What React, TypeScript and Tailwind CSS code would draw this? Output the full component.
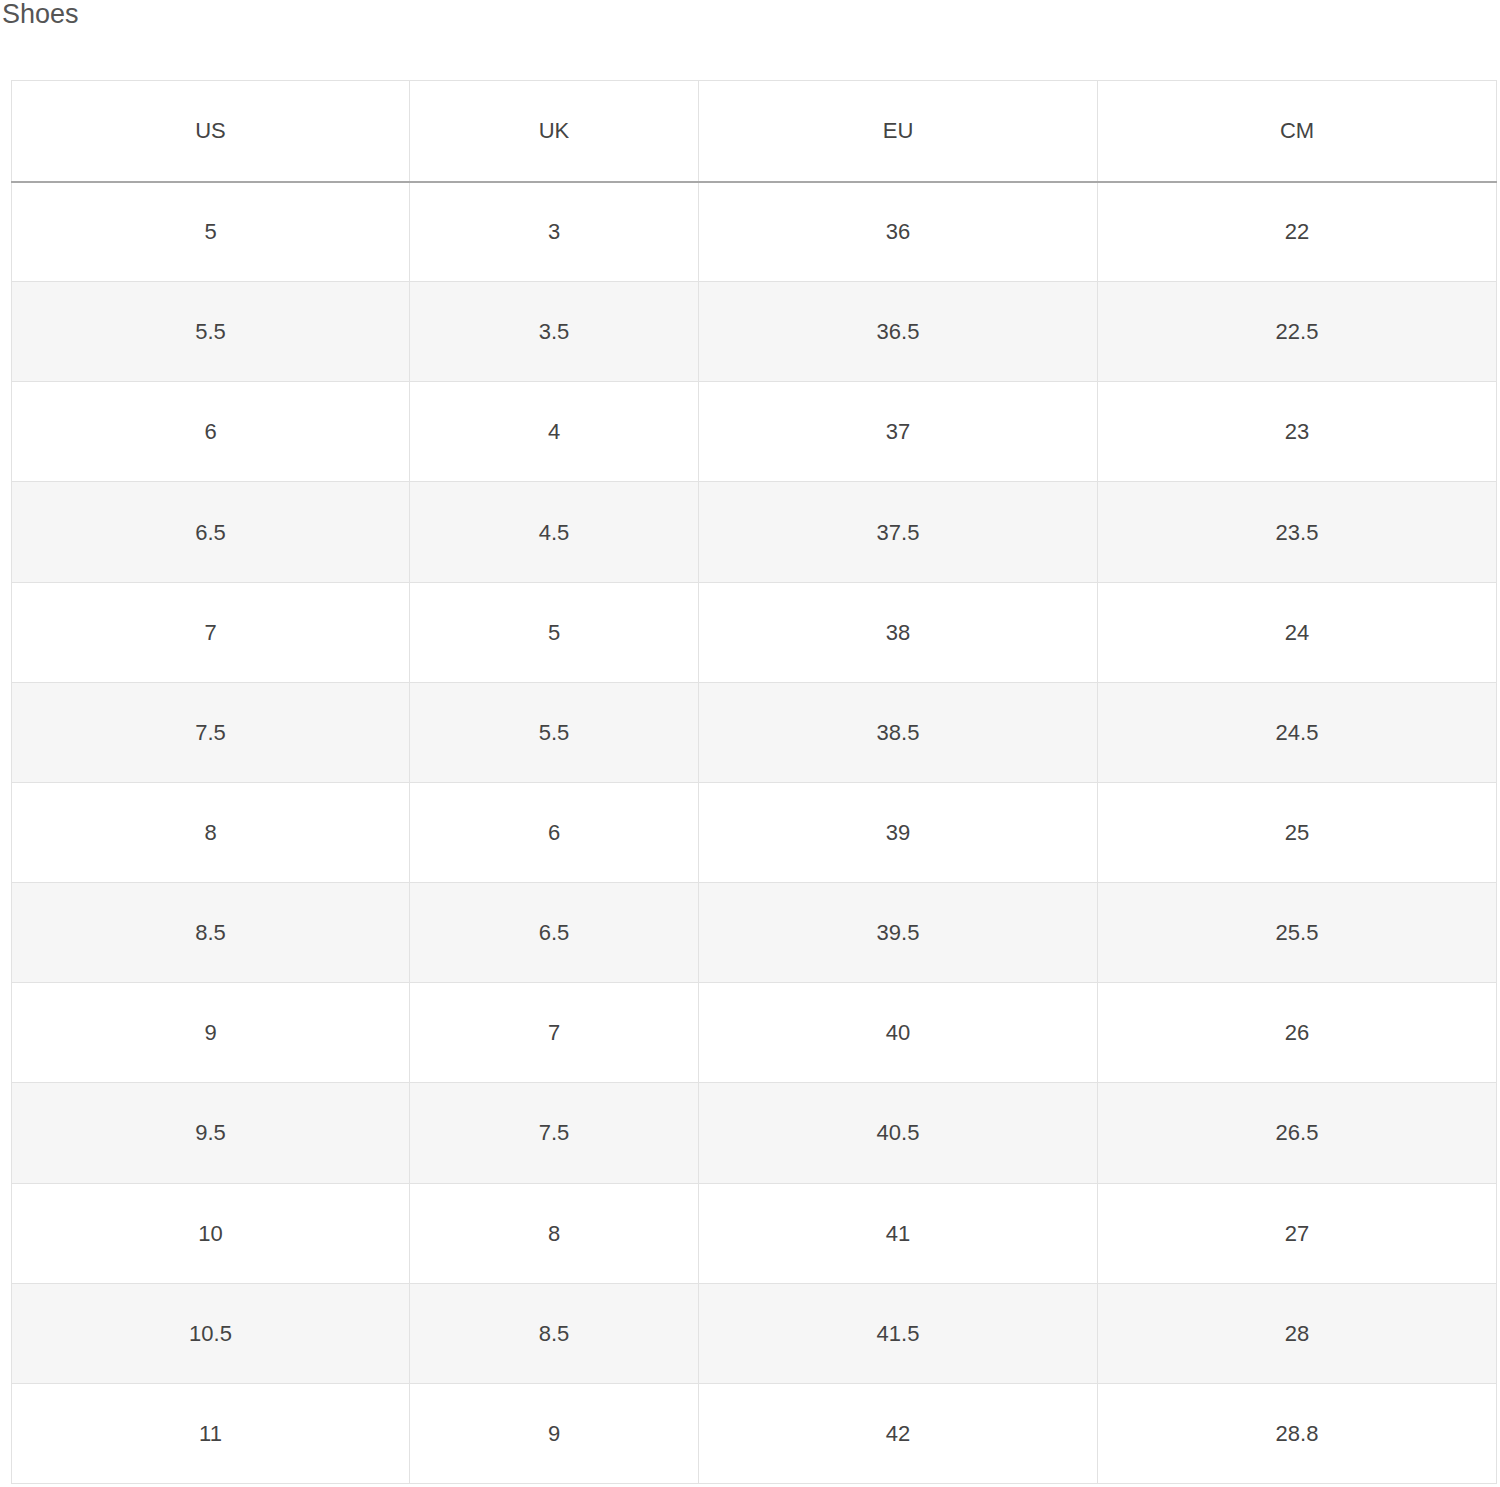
import React from "react";

const rows: string[][] = [
  ["5", "3", "36", "22"],
  ["5.5", "3.5", "36.5", "22.5"],
  ["6", "4", "37", "23"],
  ["6.5", "4.5", "37.5", "23.5"],
  ["7", "5", "38", "24"],
  ["7.5", "5.5", "38.5", "24.5"],
  ["8", "6", "39", "25"],
  ["8.5", "6.5", "39.5", "25.5"],
  ["9", "7", "40", "26"],
  ["9.5", "7.5", "40.5", "26.5"],
  ["10", "8", "41", "27"],
  ["10.5", "8.5", "41.5", "28"],
  ["11", "9", "42", "28.8"],
];

export default function App() {
  return (
    <div className="bg-white w-[1500px] h-[1487px] overflow-hidden" style={{ fontFamily: '"Liberation Sans", Arial, sans-serif' }}>
      <h1 className="text-[27px] leading-[27px] text-[#555] font-normal pl-[2px] pt-[1px] m-0">Shoes</h1>
      <div className="pl-[11px] pt-[52px]">
        <table className="border-collapse table-fixed w-[1485px] text-[22px] text-[#444]">
          <colgroup>
            <col className="w-[398px]" />
            <col className="w-[289px]" />
            <col className="w-[399px]" />
            <col className="w-[399px]" />
          </colgroup>
          <thead>
            <tr className="h-[101px]">
              {["US", "UK", "EU", "CM"].map((h) => (
                <th key={h} className="font-normal text-center border border-[#e2e2e2] border-b-2 border-b-[#a8a8a8] p-0">
                  {h}
                </th>
              ))}
            </tr>
          </thead>
          <tbody>
            {rows.map((r, i) => (
              <tr key={i} className={i % 2 === 1 ? "bg-[#f6f6f6] h-[100.16px]" : "bg-white h-[100.16px]"}>
                {r.map((c, j) => (
                  <td key={j} className="text-center border border-[#e2e2e2] p-0">
                    {c}
                  </td>
                ))}
              </tr>
            ))}
          </tbody>
        </table>
      </div>
    </div>
  );
}
